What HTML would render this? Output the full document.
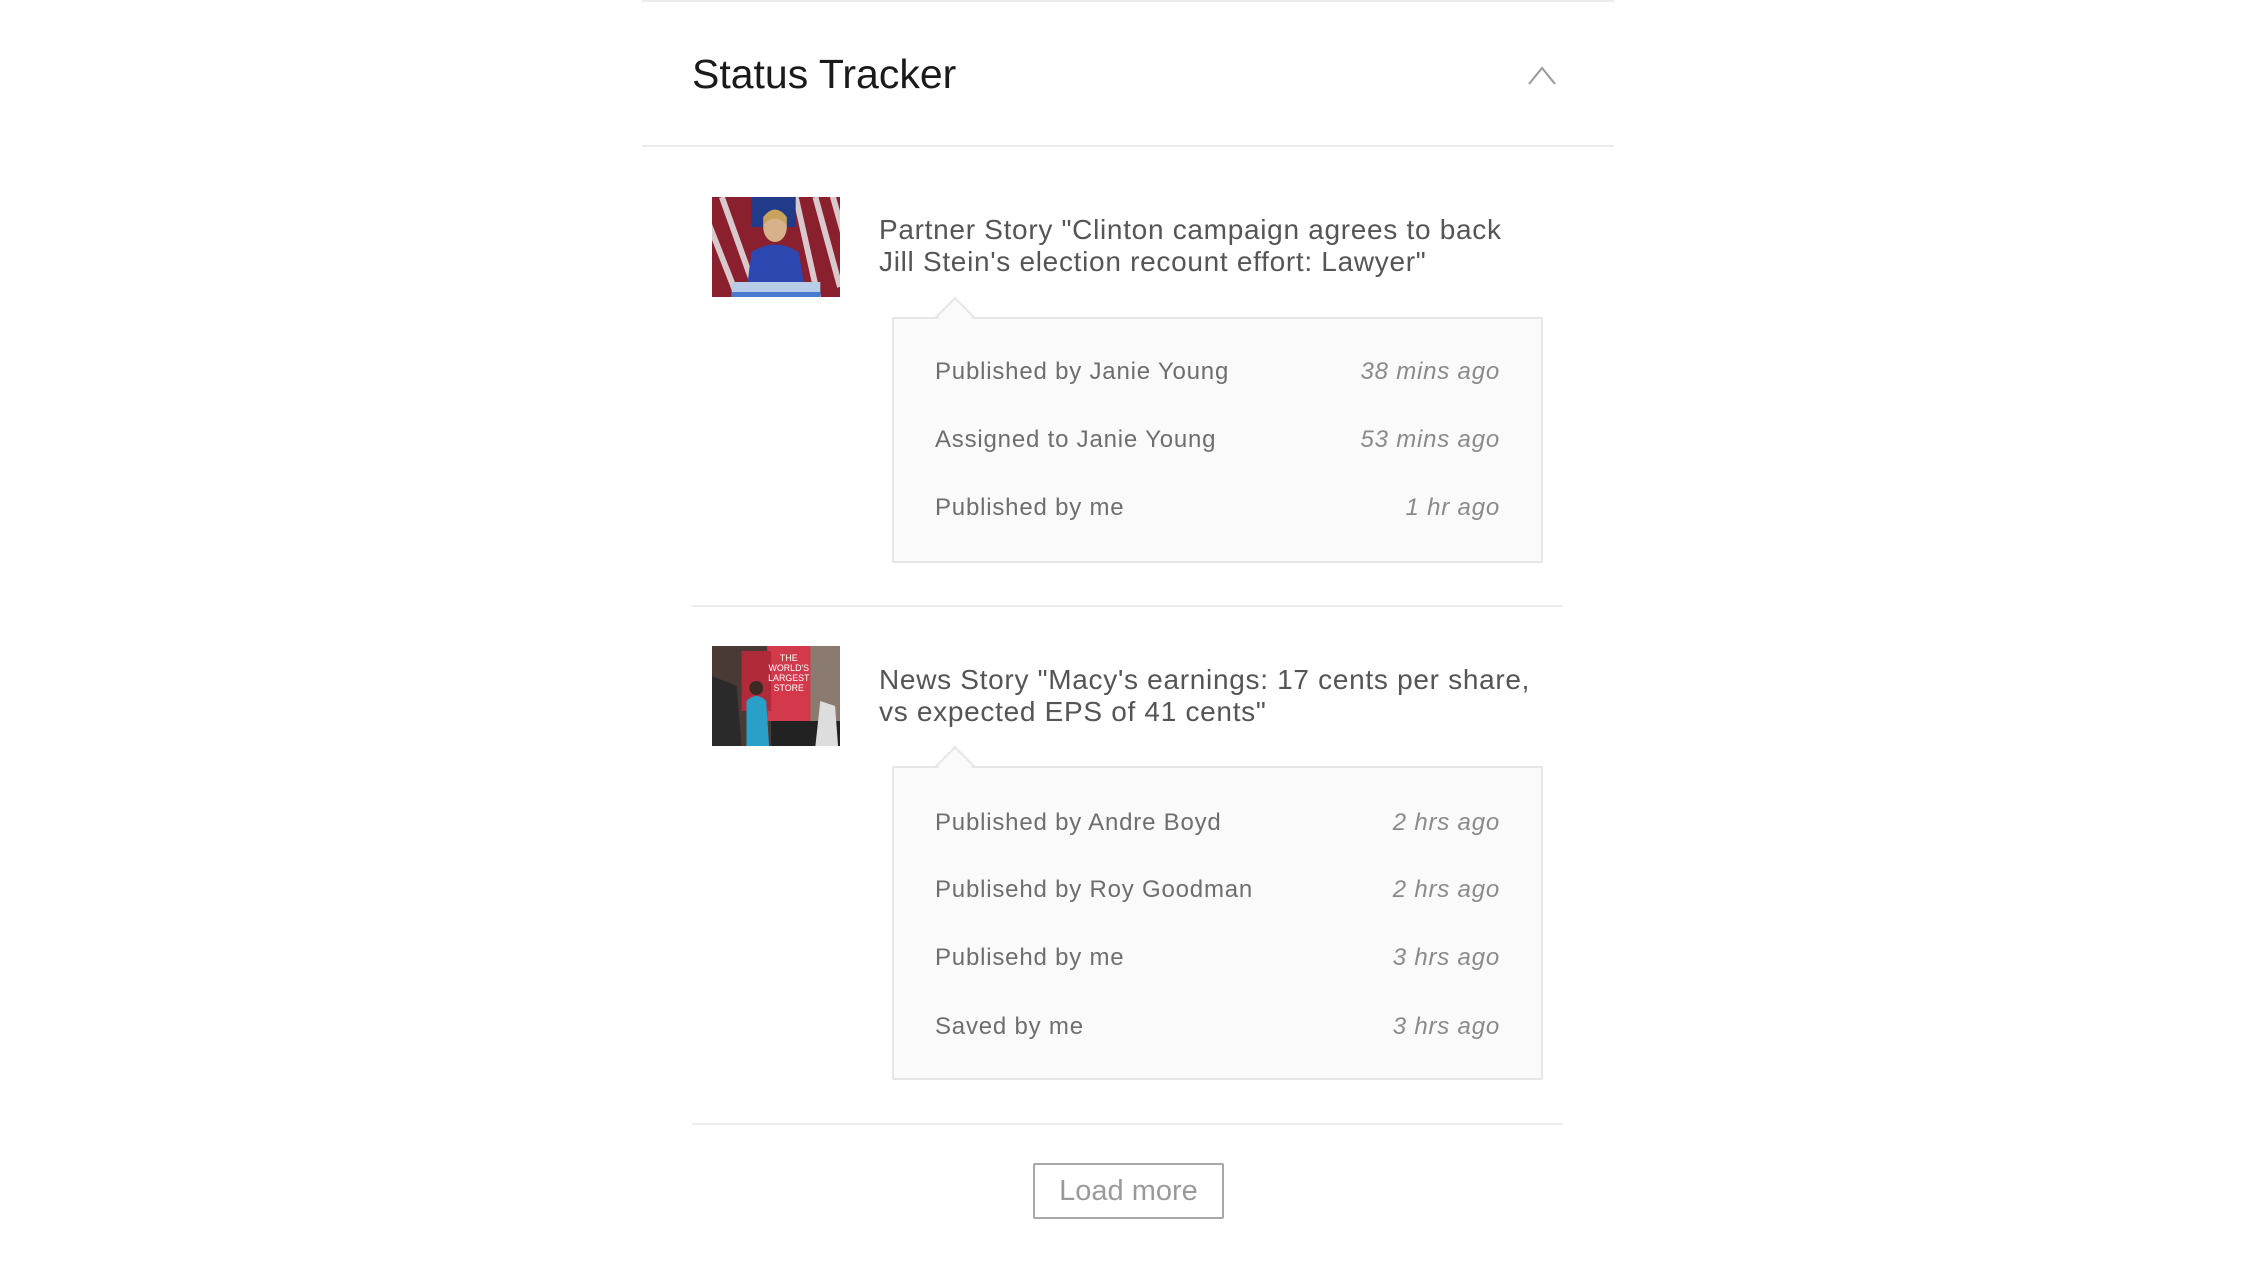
<!DOCTYPE html>
<html><head><meta charset="utf-8"><style>
*{margin:0;padding:0;box-sizing:border-box}
body{width:2259px;height:1271px;background:#fff;font-family:"Liberation Sans",sans-serif;position:relative;overflow:hidden}
.abs{position:absolute}
.line{position:absolute;height:2px;background:#ececec}
.title{left:692px;top:50px;font-size:41px;color:#1a1a1a;line-height:48px}
.story{font-size:28px;letter-spacing:0.7px;color:#555;line-height:32px;left:879px}
.box{position:absolute;left:892px;width:651px;background:#fafafa;border:2px solid #e6e6e6;border-radius:2px}
.arrow{position:absolute;width:30px;height:30px;background:#fafafa;border-left:2px solid #e6e6e6;border-top:2px solid #e6e6e6;transform:rotate(45deg)}
.row{position:absolute;left:41px;right:41px;font-size:24px;letter-spacing:0.8px;color:#6e6e6e;line-height:30px}
.row span{float:right;font-style:italic;color:#8a8a8a}
</style></head><body>
<div class="line" style="left:642px;width:972px;top:0"></div>
<div class="abs title">Status Tracker</div>
<svg class="abs" style="left:1527px;top:64px" width="30" height="22" viewBox="0 0 30 22"><path d="M2 20 L15 4 L28 20" fill="none" stroke="#999" stroke-width="2"/></svg>
<div class="line" style="left:642px;width:972px;top:145px"></div>

<svg class="abs" style="left:712px;top:197px" width="128" height="100" viewBox="0 0 130 100" preserveAspectRatio="none">
<rect width="130" height="100" fill="#8a1f2e"/>
<g stroke="#d9c9cc" stroke-width="6"><path d="M-10 10 L30 110 M10 0 L50 110 M85 0 L110 110 M105 0 L130 90 M120 -10 L140 60"/></g>
<rect x="40" y="0" width="45" height="30" fill="#223a8a"/>
<ellipse cx="64" cy="30" rx="12" ry="15" fill="#d8b08a"/>
<path d="M52 20 Q64 5 76 20 L76 28 Q64 15 52 28Z" fill="#c9a35a"/>
<path d="M35 95 L40 55 Q64 40 88 55 L95 95Z" fill="#2c48b0"/>
<rect x="20" y="85" width="90" height="15" fill="#b8cde8"/>
<rect x="20" y="95" width="90" height="5" fill="#4a7ad0"/>
</svg>
<div class="abs story" style="top:214px">Partner Story "Clinton campaign agrees to back<br>Jill Stein's election recount effort: Lawyer"</div>
<div class="arrow" style="left:940px;top:303px"></div>
<div class="box" style="top:317px;height:246px">
<div class="row" style="top:38px">Published by Janie Young<span>38 mins ago</span></div>
<div class="row" style="top:106px">Assigned to Janie Young<span>53 mins ago</span></div>
<div class="row" style="top:174px">Published by me<span>1 hr ago</span></div>
</div>
<div class="arrow" style="left:940px;top:303px;border:none;width:26px;height:26px;margin:4px 0 0 2px;z-index:2"></div>

<div class="line" style="left:692px;width:871px;top:605px"></div>

<svg class="abs" style="left:712px;top:646px" width="128" height="100" viewBox="0 0 130 100" preserveAspectRatio="none">
<rect width="130" height="100" fill="#4a3a36"/>
<rect x="90" y="0" width="40" height="100" fill="#8a7a70"/>
<rect x="56" y="0" width="44" height="75" fill="#d23a4c"/>
<rect x="30" y="5" width="30" height="60" fill="#b02a3a"/>
<text x="78" y="15" font-size="9" fill="#fff" text-anchor="middle" font-family="Liberation Sans">THE</text>
<text x="78" y="25" font-size="9" fill="#fff" text-anchor="middle" font-family="Liberation Sans">WORLD'S</text>
<text x="78" y="35" font-size="9" fill="#fff" text-anchor="middle" font-family="Liberation Sans">LARGEST</text>
<text x="78" y="45" font-size="9" fill="#fff" text-anchor="middle" font-family="Liberation Sans">STORE</text>
<path d="M0 30 L25 40 L30 100 L0 100Z" fill="#2a2a2a"/>
<path d="M35 55 Q45 45 55 55 L58 100 L35 100Z" fill="#2aa0c8"/>
<circle cx="45" cy="42" r="7" fill="#3a2a22"/>
<path d="M60 75 L130 75 L130 100 L60 100Z" fill="#222"/>
<path d="M110 55 L125 60 L128 100 L105 100Z" fill="#ddd"/>
</svg>
<div class="abs story" style="top:664px">News Story "Macy's earnings: 17 cents per share,<br>vs expected EPS of 41 cents"</div>
<div class="arrow" style="left:940px;top:752px"></div>
<div class="box" style="top:766px;height:314px">
<div class="row" style="top:40px">Published by Andre Boyd<span>2 hrs ago</span></div>
<div class="row" style="top:107px">Publisehd by Roy Goodman<span>2 hrs ago</span></div>
<div class="row" style="top:175px">Publisehd by me<span>3 hrs ago</span></div>
<div class="row" style="top:244px">Saved by me<span>3 hrs ago</span></div>
</div>
<div class="arrow" style="left:940px;top:752px;border:none;width:26px;height:26px;margin:4px 0 0 2px;z-index:2"></div>

<div class="line" style="left:692px;width:871px;top:1123px"></div>
<div class="abs" style="left:1033px;top:1163px;width:191px;height:56px;border:2px solid #a8a8a8;border-radius:2px;font-size:29px;color:#9a9a9a;text-align:center;line-height:52px">Load more</div>
</body></html>
